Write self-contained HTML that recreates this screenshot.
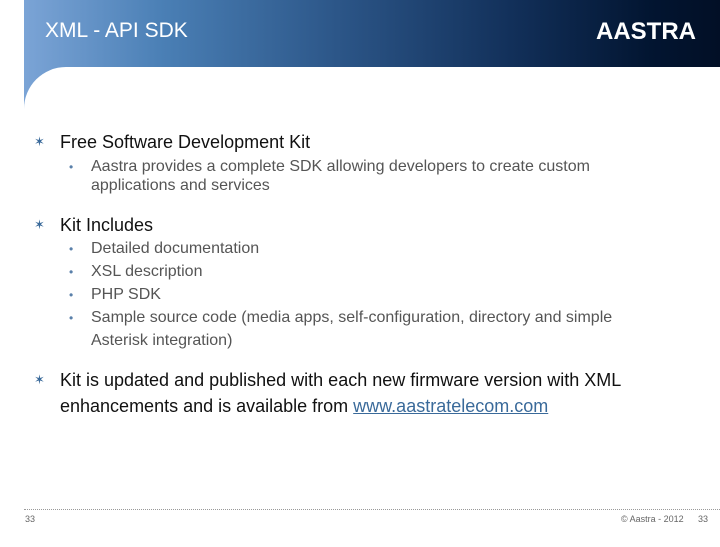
<!DOCTYPE html>
<html><head><meta charset="utf-8"><style>
*{margin:0;padding:0}
body{width:720px;height:540px;position:relative;background:#fff;font-family:"Liberation Sans",Arial,sans-serif;overflow:hidden}
.hdr{position:absolute;left:24px;top:0;width:696px;height:110px;background:linear-gradient(90deg,#7ba4d6 0%,#4a7fb5 20%,#2c5688 45%,#12305a 70%,#021531 90%,#020f26 100%)}
.panel{position:absolute;left:24px;top:67px;width:720px;height:480px;background:#fff;border-top-left-radius:42px}
.title{position:absolute;left:45px;top:19px;color:#fff;font-size:21px}
.logo{position:absolute;left:596px;top:18px;color:#fff;font-weight:bold;font-size:24px}
.t{position:absolute;white-space:nowrap}
.l1{font-size:18px;color:#111;left:60px}
.l2{font-size:16px;color:#555;left:91px}
.b1{position:absolute;left:34px;font-size:13px;color:#3a6a9a}
.b2{position:absolute;left:69px;font-size:12px;color:#5a80aa}
a{color:#3a6a9a;text-decoration:underline}
.foot{position:absolute;left:24px;top:509px;width:696px;border-top:1px dotted #999}
.f{position:absolute;font-size:9px;color:#666;top:514px}
</style></head><body>
<div class="hdr"></div>
<div class="panel"></div>
<div class="title">XML - API SDK</div>
<div class="logo">AASTRA</div>

<div class="b1" style="top:134px">✶</div>
<div class="t l1" style="top:132px">Free Software Development Kit</div>
<div class="b2" style="top:160px">•</div>
<div class="t l2" style="top:158px">Aastra provides a complete SDK allowing developers to create custom</div>
<div class="t l2" style="top:177px">applications and services</div>

<div class="b1" style="top:217px">✶</div>
<div class="t l1" style="top:215px">Kit Includes</div>
<div class="b2" style="top:242px">•</div>
<div class="t l2" style="top:240px">Detailed documentation</div>
<div class="b2" style="top:265px">•</div>
<div class="t l2" style="top:263px">XSL description</div>
<div class="b2" style="top:288px">•</div>
<div class="t l2" style="top:286px">PHP SDK</div>
<div class="b2" style="top:311px">•</div>
<div class="t l2" style="top:309px">Sample source code (media apps, self-configuration, directory and simple</div>
<div class="t l2" style="top:332px">Asterisk integration)</div>

<div class="b1" style="top:372px">✶</div>
<div class="t l1" style="top:370px">Kit is updated and published with each new firmware version with XML</div>
<div class="t l1" style="top:396px">enhancements and is available from <a>www.aastratelecom.com</a></div>

<div class="foot"></div>
<div class="f" style="left:25px">33</div>
<div class="f" style="left:621px">© Aastra - 2012</div>
<div class="f" style="left:698px">33</div>
</body></html>
